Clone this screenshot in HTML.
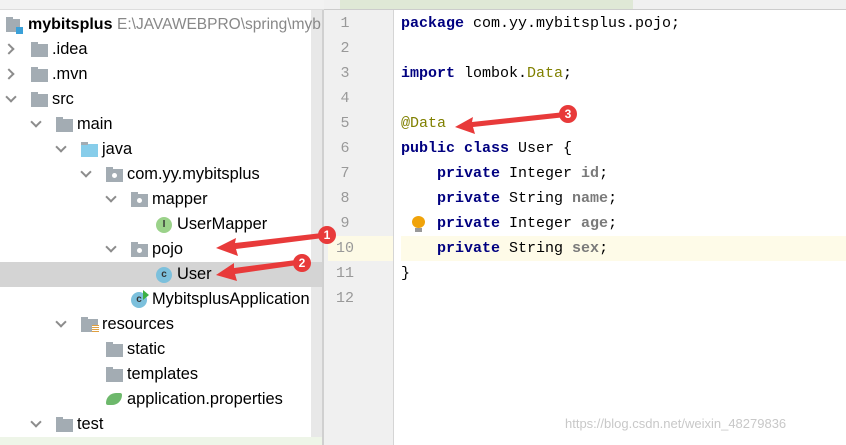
<!DOCTYPE html>
<html><head><meta charset="utf-8"><style>
body{margin:0;width:846px;height:445px;overflow:hidden;background:#fff;position:relative;font-family:"Liberation Sans","Noto Sans CJK SC",sans-serif}
.abs{position:absolute}
.row{position:absolute;left:0;width:312px;height:25px;font-size:16.4px;color:#000;line-height:25px;white-space:nowrap}
.chev{position:absolute;width:6px;height:6px;border-right:2px solid #8c8c8c;border-bottom:2px solid #8c8c8c}
.chev.d{transform:rotate(45deg)}
.chev.r{transform:rotate(-45deg)}
.fold{position:absolute;width:17px;height:13px;background:#a3acb3;top:7px}
.fold:before{content:"";position:absolute;left:0;top:-2px;width:7px;height:3px;background:#a3acb3}
.pk:after{content:"";position:absolute;left:6px;top:4px;width:5px;height:5px;border-radius:50%;background:#fff}
.ci{position:absolute;width:16px;height:16px;border-radius:50%;top:5px;font-size:10px;line-height:16px;text-align:center;color:#333;font-weight:bold}
.code{position:absolute;left:401px;font-family:"Liberation Mono",monospace;font-size:15px;color:#000;white-space:pre;line-height:25px}
.ln{position:absolute;left:330px;width:30px;text-align:center;font-family:"Liberation Mono",monospace;font-size:15px;color:#999;line-height:25px}
b{color:#000080}
.an{color:#808000}
.fd{color:#7a7a7a;font-weight:bold}
</style></head><body>
<div class="abs" style="left:0;top:0;width:324px;height:9px;background:#f2f2f2;border-bottom:1px solid #ddd"></div>
<div class="abs" style="left:324px;top:0;width:522px;height:9px;background:#f0f0f0;border-bottom:1px solid #ccc"></div>
<div class="abs" style="left:340px;top:0;width:293px;height:9px;background:#dfe8d6"></div>
<div class="abs" style="left:311px;top:10px;width:11px;height:435px;background:#e8e8e8"></div>
<div class="abs" style="left:322px;top:10px;width:2px;height:435px;background:#d0d0d0"></div>
<div class="abs" style="left:0;top:262px;width:322px;height:25px;background:#d4d4d4"></div>
<div class="abs" style="left:0;top:437px;width:322px;height:8px;background:#eef5e8"></div>
<div class="row" style="top:12px"><div class="fold" style="left:6px;width:14px"></div><div class="abs" style="left:16px;top:15px;width:7px;height:7px;background:#3aa0d8"></div><span class="abs" style="left:28px;font-weight:bold;font-size:16px">mybitsplus</span><span class="abs" style="left:117px;color:#888;font-size:15.5px">E:\JAVAWEBPRO\spring\myb</span></div>
<div class="row" style="top:37px"><div class="chev r" style="left:5px;top:8px"></div><div class="fold" style="left:31px"></div><span class="abs" style="left:52px">.idea</span></div>
<div class="row" style="top:62px"><div class="chev r" style="left:5px;top:8px"></div><div class="fold" style="left:31px"></div><span class="abs" style="left:52px">.mvn</span></div>
<div class="row" style="top:87px"><div class="chev d" style="left:7px;top:6px"></div><div class="fold" style="left:31px"></div><span class="abs" style="left:52px">src</span></div>
<div class="row" style="top:112px"><div class="chev d" style="left:32px;top:6px"></div><div class="fold" style="left:56px"></div><span class="abs" style="left:77px">main</span></div>
<div class="row" style="top:137px"><div class="chev d" style="left:57px;top:6px"></div><div class="fold" style="left:81px;background:#87cdea"></div><span class="abs" style="left:102px">java</span></div>
<div class="row" style="top:162px"><div class="chev d" style="left:82px;top:6px"></div><div class="fold pk" style="left:106px"></div><span class="abs" style="left:127px">com.yy.mybitsplus</span></div>
<div class="row" style="top:187px"><div class="chev d" style="left:107px;top:6px"></div><div class="fold pk" style="left:131px"></div><span class="abs" style="left:152px">mapper</span></div>
<div class="row" style="top:212px"><div class="ci" style="left:156px;background:#9bd28a">I</div><span class="abs" style="left:177px">UserMapper</span></div>
<div class="row" style="top:237px"><div class="chev d" style="left:107px;top:6px"></div><div class="fold pk" style="left:131px"></div><span class="abs" style="left:152px">pojo</span></div>
<div class="row" style="top:262px"><div class="ci" style="left:156px;background:#7cc0dc">c</div><span class="abs" style="left:177px">User</span></div>
<div class="row" style="top:287px"><div class="ci" style="left:131px;background:#7cc0dc">c</div><div class="abs" style="left:143px;top:3px;width:0;height:0;border-left:6px solid #3cb043;border-top:5px solid transparent;border-bottom:5px solid transparent"></div><span class="abs" style="left:152px">MybitsplusApplication</span></div>
<div class="row" style="top:312px"><div class="chev d" style="left:57px;top:6px"></div><div class="fold" style="left:81px"></div><div class="abs" style="left:92px;top:13px;width:7px;height:8px;background:repeating-linear-gradient(#e0a040 0 1px,#fff 1px 2px)"></div><span class="abs" style="left:102px">resources</span></div>
<div class="row" style="top:337px"><div class="fold" style="left:106px"></div><span class="abs" style="left:127px">static</span></div>
<div class="row" style="top:362px"><div class="fold" style="left:106px"></div><span class="abs" style="left:127px">templates</span></div>
<div class="row" style="top:387px"><div class="abs" style="left:106px;top:6px;width:16px;height:12px;border-radius:10px 2px 10px 2px;background:#6db86b"></div><span class="abs" style="left:127px">application.properties</span></div>
<div class="row" style="top:412px"><div class="chev d" style="left:32px;top:6px"></div><div class="fold" style="left:56px"></div><span class="abs" style="left:77px">test</span></div>
<div class="abs" style="left:324px;top:10px;width:69px;height:435px;background:#f0f0f0"></div>
<div class="abs" style="left:393px;top:10px;width:1px;height:435px;background:#d5d5d5"></div>
<div class="abs" style="left:328px;top:236px;width:65px;height:25px;background:#fdfae6"></div>
<div class="abs" style="left:401px;top:236px;width:445px;height:25px;background:#fefbe8"></div>
<div class="ln" style="top:11px">1</div><div class="ln" style="top:36px">2</div><div class="ln" style="top:61px">3</div><div class="ln" style="top:86px">4</div><div class="ln" style="top:111px">5</div><div class="ln" style="top:136px">6</div><div class="ln" style="top:161px">7</div><div class="ln" style="top:186px">8</div><div class="ln" style="top:211px">9</div><div class="ln" style="top:236px">10</div><div class="ln" style="top:261px">11</div><div class="ln" style="top:286px">12</div>
<div class="code" style="top:11px"><b>package</b> com.yy.mybitsplus.pojo;</div>
<div class="code" style="top:61px"><b>import</b> lombok.<span class="an">Data</span>;</div>
<div class="code" style="top:111px"><span class="an">@Data</span></div>
<div class="code" style="top:136px"><b>public class</b> User {</div>
<div class="code" style="top:161px">    <b>private</b> Integer <span class="fd">id</span>;</div>
<div class="code" style="top:186px">    <b>private</b> String <span class="fd">name</span>;</div>
<div class="code" style="top:211px">    <b>private</b> Integer <span class="fd">age</span>;</div>
<div class="code" style="top:236px">    <b>private</b> String <span class="fd">sex</span>;</div>
<div class="code" style="top:261px">}</div>
<div class="abs" style="left:412px;top:216px;width:13px;height:12px;border-radius:50%;background:#f0a30a"></div>
<div class="abs" style="left:415px;top:228px;width:7px;height:4px;background:#999"></div>
<div class="abs" style="left:565px;top:416px;font-size:13px;color:#c8c8c8">https://blog.csdn.net/weixin_48279836</div>
<svg class="abs" style="left:0;top:0" width="846" height="445">
<g fill="#e83a3a">
<polygon points="216,248 236,238 235,243 322,233 323,238 236,249 238,256"/>
<polygon points="216,275 234,263 234,268 296,260 298,265 235,274 237,281"/>
<polygon points="455,127 473,117 472,122 565,112 566,117 473,127 475,134"/>
<circle cx="327" cy="235" r="9"/><circle cx="302" cy="263" r="9"/><circle cx="568" cy="114" r="9"/>
</g>
<g fill="#fff" font-family="Liberation Sans" font-size="12" font-weight="bold" text-anchor="middle">
<text x="327" y="239">1</text><text x="302" y="267">2</text><text x="568" y="118">3</text>
</g>
</svg>
</body></html>
